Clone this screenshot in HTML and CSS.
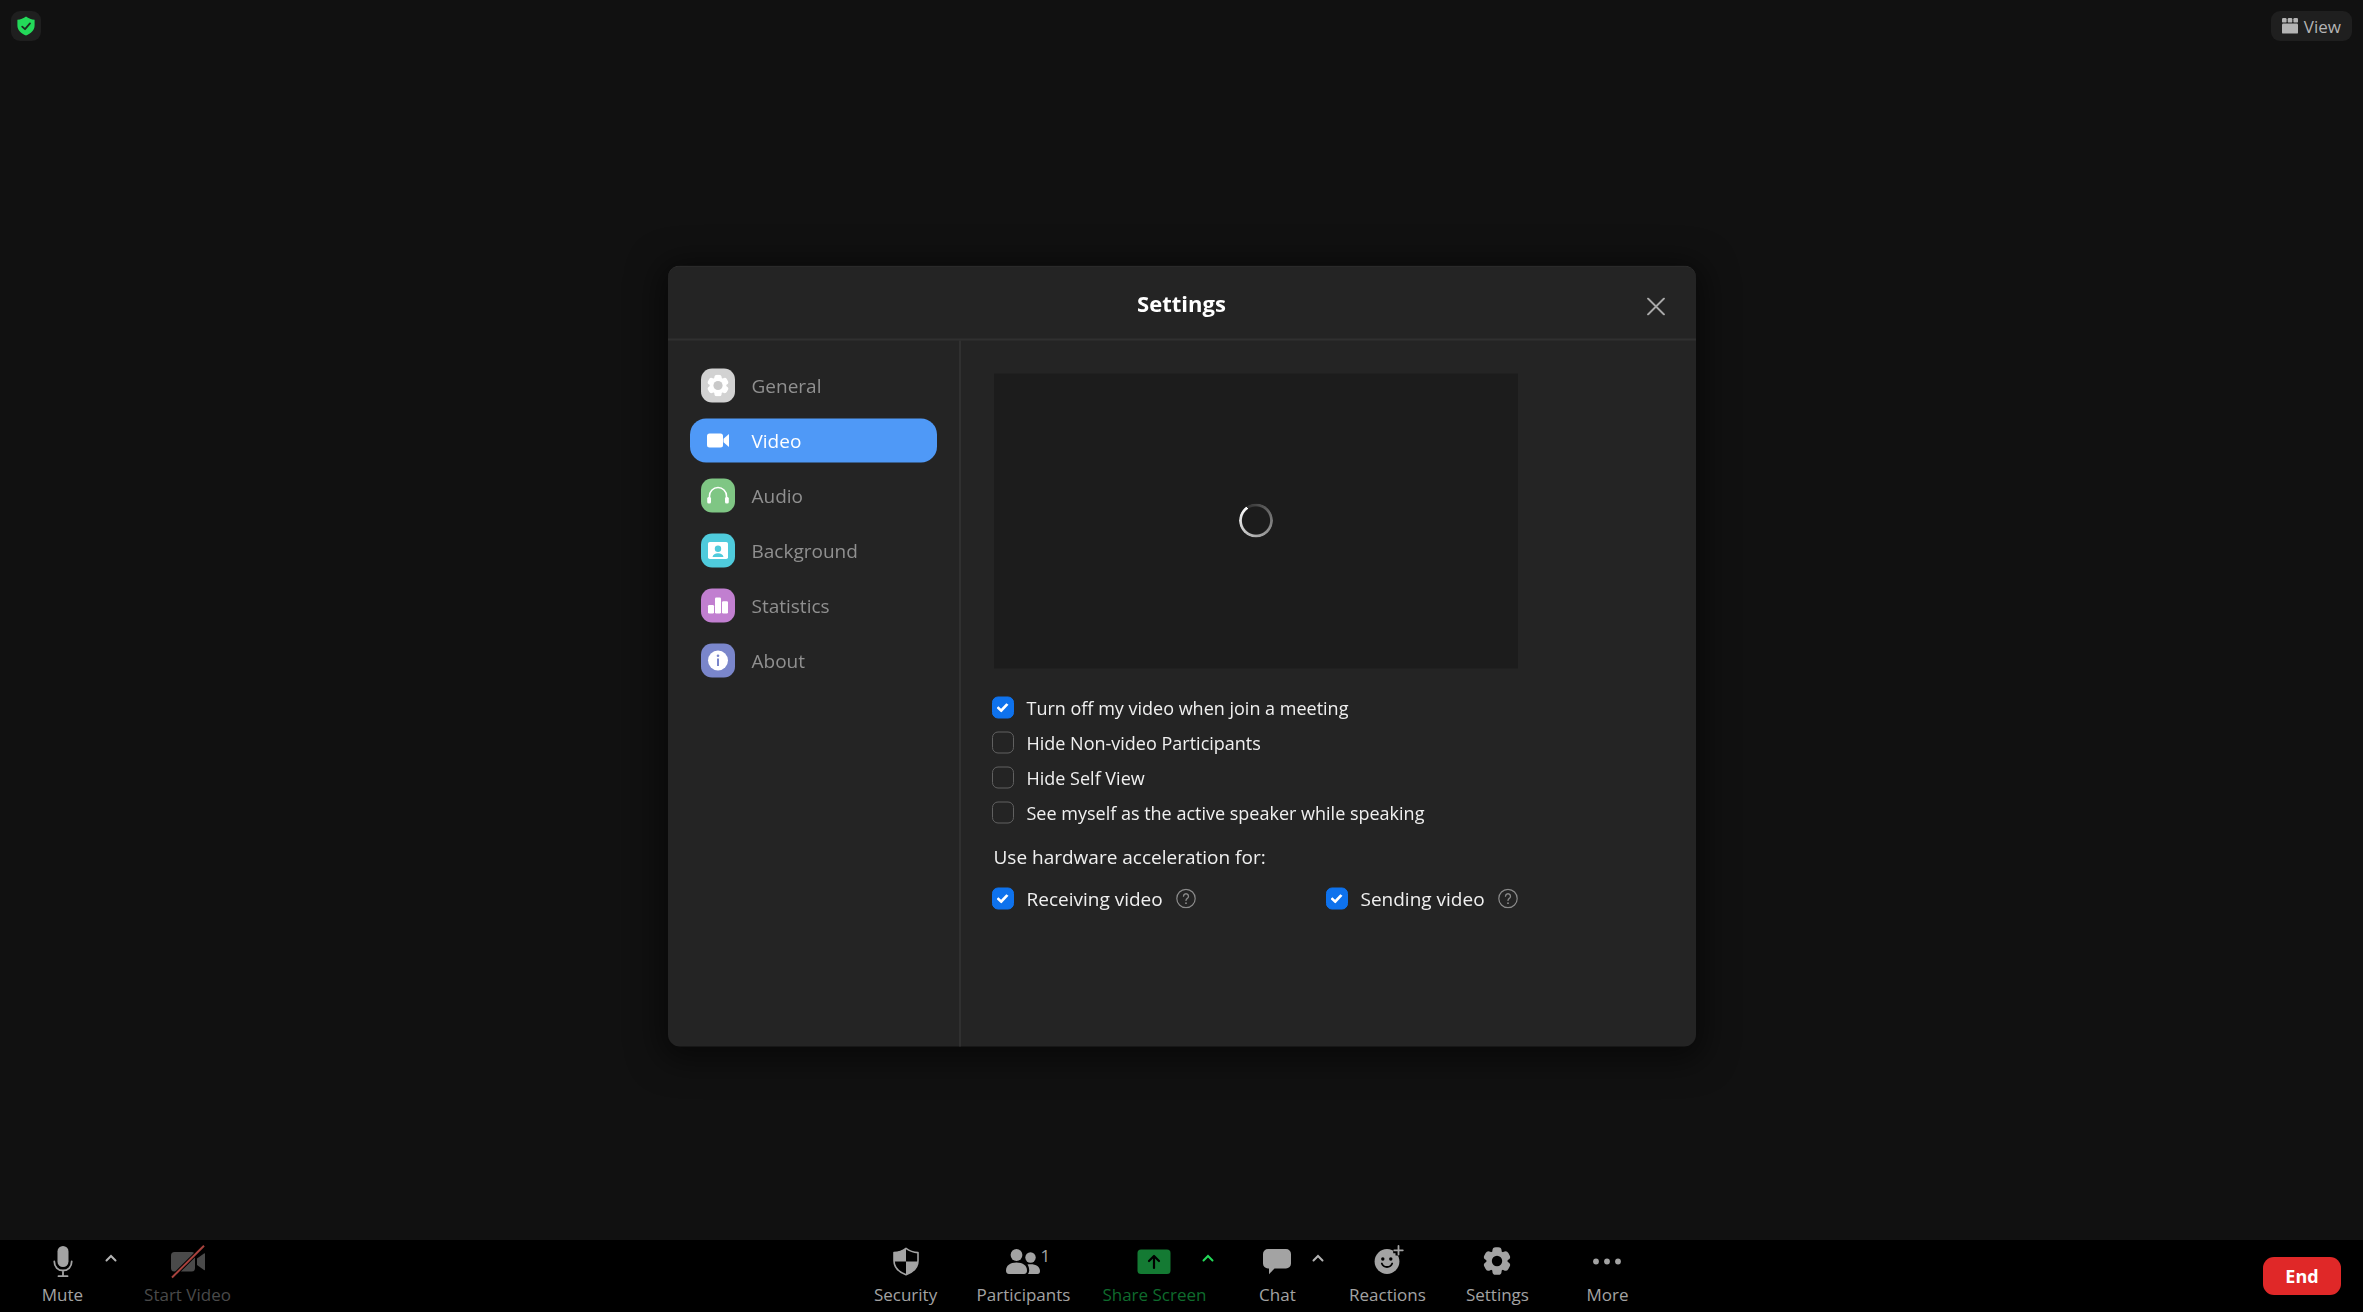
FILE: index.html
```html
<!DOCTYPE html>
<html lang="en">
<head>
    <meta charset="UTF-8">
    <meta name="viewport" content="width=device-width, initial-scale=1.0">
    <title>Meeting</title>
    <link rel="stylesheet" href="styles.css">
</head>
<body>
    <!-- shared shapes -->
    <svg class="defs" aria-hidden="true">
        <symbol id="gear" viewBox="-14 -14 28 28">
            <circle r="10.6"></circle>
            <rect x="-4.6" y="-13.8" width="9.2" height="27.6" rx="3.4"></rect>
            <rect x="-4.6" y="-13.8" width="9.2" height="27.6" rx="3.4" transform="rotate(60)"></rect>
            <rect x="-4.6" y="-13.8" width="9.2" height="27.6" rx="3.4" transform="rotate(120)"></rect>
        </symbol>
        <symbol id="caret" viewBox="0 0 12 8">
            <path d="M1.5 6.5 6 2l4.5 4.5" fill="none" stroke="currentColor" stroke-width="2" stroke-linecap="round"></path>
        </symbol>
        <symbol id="help" viewBox="0 0 20 20">
            <g fill="none" stroke="currentColor" stroke-linecap="round">
                <circle cx="10" cy="10" r="9.2" stroke-width="1.2"></circle>
                <path d="M7.5 7.7a2.5 2.5 0 1 1 3.8 2.2c-.9.6-1.3 1-1.3 2" stroke-width="1.3"></path>
                <path d="M10 14.6v.1" stroke-width="1.8"></path>
            </g>
        </symbol>
    </svg>

    <header class="topbar">
        <button class="badge badge-shield" aria-label="Meeting info">
            <svg width="18" height="20" viewBox="0 0 18 20">
                <path d="M9 .5c2.5 2 5.5 3 8.6 3.3v5.7c0 4.600-3.7 8.2-8.600 10C4.100 17.700.4 14.100.4 9.500V3.800C3.500 3.500 6.500 2.500 9 .5z" fill="#23d959"></path>
                <path d="M5.2 10.6 8 13.2l5-5.8" fill="none" stroke="#1b2b20" stroke-width="1.8" stroke-linecap="round" stroke-linejoin="round"></path>
            </svg>
        </button>
        <button class="badge badge-view">
            <svg width="16" height="16" viewBox="0 0 16 16" fill="#b4b4b4">
                <rect x="0" y="0" width="4.6" height="4.6" rx="1.2"></rect>
                <rect x="5.7" y="0" width="4.6" height="4.6" rx="1.2"></rect>
                <rect x="11.4" y="0" width="4.6" height="4.6" rx="1.2"></rect>
                <rect x="0" y="5.6" width="16" height="10" rx="1.2"></rect>
            </svg>
            View
        </button>
    </header>

    <main class="stage">
        <section class="modal" role="dialog" aria-labelledby="settings-title">
            <div class="modal-header">
                <h2 id="settings-title">Settings</h2>
                <button class="close" aria-label="Close">
                    <svg width="18" height="18" viewBox="0 0 18 18" fill="none" stroke="currentColor" stroke-width="1.8" stroke-linecap="round">
                        <path d="M1 1l16 16M17 1 1 17"></path>
                    </svg>
                </button>
            </div>
            <div class="modal-body">
                <nav class="tabs">
                    <button class="tab">
                        <svg class="tab-icon general" viewBox="0 0 34 34">
                            <use href="#gear" x="6" y="6" width="22" height="22" fill="#fff"></use>
                            <circle cx="17" cy="17" r="4.6" fill="#c9c9c9"></circle>
                        </svg>
                        General
                    </button>
                    <button class="tab active">
                        <svg class="tab-icon" viewBox="0 0 34 34" fill="#fff">
                            <rect x="6" y="10" width="16" height="14" rx="2.5"></rect>
                            <path d="M22.5 15.2 28 10.6v12.8l-5.5-4.6z"></path>
                        </svg>
                        Video
                    </button>
                    <button class="tab">
                        <svg class="tab-icon audio" viewBox="0 0 34 34">
                            <path d="M8.5 20v-2.5a8.5 8.5 0 0 1 17 0V20" fill="none" stroke="#fff" stroke-width="1.6"></path>
                            <rect x="6.2" y="18.5" width="3.8" height="6.5" rx="1.5" fill="#fff"></rect>
                            <rect x="24" y="18.5" width="3.8" height="6.5" rx="1.5" fill="#fff"></rect>
                        </svg>
                        Audio
                    </button>
                    <button class="tab">
                        <svg class="tab-icon background" viewBox="0 0 34 34">
                            <rect x="7" y="8.5" width="20" height="17" rx="1.8" fill="#fff"></rect>
                            <circle cx="17" cy="15.3" r="3.2" fill="#4fcbdc"></circle>
                            <path d="M11.5 23.5c.6-2.6 2.6-3.7 5.5-3.7s4.9 1.1 5.5 3.7z" fill="#4fcbdc"></path>
                        </svg>
                        Background
                    </button>
                    <button class="tab">
                        <svg class="tab-icon statistics" viewBox="0 0 34 34" fill="#fff">
                            <rect x="7" y="16.5" width="6" height="8.5" rx="1.2"></rect>
                            <rect x="14" y="9" width="6" height="16" rx="1.2"></rect>
                            <rect x="21" y="12.8" width="6" height="12.2" rx="1.2"></rect>
                        </svg>
                        Statistics
                    </button>
                    <button class="tab">
                        <svg class="tab-icon about" viewBox="0 0 34 34">
                            <circle cx="17" cy="17" r="10" fill="#fff"></circle>
                            <circle cx="17" cy="12.3" r="1.3" fill="#7a86cb"></circle>
                            <rect x="16" y="15" width="2" height="7.5" fill="#7a86cb"></rect>
                        </svg>
                        About
                    </button>
                </nav>

                <div class="panel">
                    <div class="preview"><div class="spinner"></div></div>
                    <div class="options">
                        <label class="option"><input type="checkbox" checked>Turn off my video when join a meeting</label>
                        <label class="option"><input type="checkbox">Hide Non-video Participants</label>
                        <label class="option"><input type="checkbox">Hide Self View</label>
                        <label class="option"><input type="checkbox">See myself as the active speaker while speaking</label>
                    </div>
                    <p class="subtitle">Use hardware acceleration for:</p>
                    <div class="hardware">
                        <label class="option">
                            <input type="checkbox" checked>Receiving video
                            <svg class="help" width="20" height="20"><use href="#help"></use></svg>
                        </label>
                        <label class="option">
                            <input type="checkbox" checked>Sending video
                            <svg class="help" width="20" height="20"><use href="#help"></use></svg>
                        </label>
                    </div>
                </div>
            </div>
        </section>
    </main>

    <footer class="footer">
        <div class="footer-left">
            <div class="tool">
                <button class="tool-button">
                    <svg width="34" height="34" viewBox="0 0 34 34">
                        <rect x="11.5" y="1" width="11" height="21" rx="5.5" fill="currentColor"></rect>
                        <path d="M8.3 16.5c0 5.4 3.6 9 8.7 9s8.7-3.6 8.7-9M17 25.5V31M12.5 31.2h9" fill="none" stroke="currentColor" stroke-width="1.8" stroke-linecap="round"></path>
                    </svg>
                    <span>Mute</span>
                </button>
                <button class="caret" aria-label="Audio options"><svg width="12" height="8"><use href="#caret"></use></svg></button>
            </div>
            <div class="tool">
                <button class="tool-button disabled">
                    <svg width="34" height="34" viewBox="0 0 34 34">
                        <rect x="0" y="7" width="24" height="19.5" rx="3.5" fill="currentColor"></rect>
                        <path d="M26 13.500 33 8.500c.6-.4 1 0 1 .5v15.500c0 .6-.4.9-1 .5L26 20z" fill="currentColor"></path>
                        <path d="M1 32.500 33 .8" stroke="#000" stroke-width="4"></path>
                        <path d="M1 32.500 33 .8" stroke="#a8423d" stroke-width="2"></path>
                    </svg>
                    <span>Start Video</span>
                </button>
            </div>
        </div>

        <div class="footer-center">
            <div class="tool">
                <button class="tool-button">
                    <svg width="34" height="34" viewBox="0 0 34 34">
                        <path d="M17 3.3c3.5 2.6 7.5 4 12 4.3v8.2c0 6.5-5 11.3-12 14-7-2.7-12-7.5-12-14V7.6c4.5-.3 8.5-1.7 12-4.3z" fill="none" stroke="currentColor" stroke-width="1.6" stroke-linejoin="round"></path>
                        <path d="M17 3.3V16.5H5V7.6c4.5-.3 8.5-1.7 12-4.3zM17 16.5h12c-.4 6-5.2 10.7-12 13.3z" fill="currentColor"></path>
                    </svg>
                    <span>Security</span>
                </button>
            </div>
            <div class="tool">
                <button class="tool-button">
                    <svg width="34" height="34" viewBox="0 0 34 34" fill="currentColor">
                        <circle cx="10.5" cy="10" r="5.9"></circle>
                        <path d="M0 25.500c0-5 4-8 10.500-8s10.500 3 10.500 8c0 2.200-1 3.500-3 3.500H3c-2 0-3-1.300-3-3.500z"></path>
                        <circle cx="24.5" cy="12.5" r="5.2"></circle>
                        <path d="M21.500 19.600c.9-.2 1.900-.3 3-.3 5.800 0 9.500 2.700 9.500 6.700 0 2-.9 3-2.500 3H22c.8-1 1.200-2.200 1.200-3.500 0-2.300-.6-4.300-1.700-5.900z"></path>
                    </svg>
                    <span>Participants</span>
                    <span class="count">1</span>
                </button>
            </div>
            <div class="tool share">
                <button class="tool-button">
                    <svg width="34" height="34" viewBox="0 0 34 34">
                        <rect x=".5" y="4.5" width="33" height="24.5" rx="3.5" fill="#147a33"></rect>
                        <path d="M17 23V11.5M12 16l5-5 5 5" fill="none" stroke="#000" stroke-width="2.2" stroke-linecap="round" stroke-linejoin="round"></path>
                    </svg>
                    <span>Share Screen</span>
                </button>
                <button class="caret" aria-label="Share options"><svg width="12" height="8"><use href="#caret"></use></svg></button>
            </div>
            <div class="tool">
                <button class="tool-button">
                    <svg width="34" height="34" viewBox="0 0 34 34">
                        <path d="M8 4h18a5 5 0 0 1 5 5v9.5a5 5 0 0 1-5 5H14.5L9 29.2v-5.7H8a5 5 0 0 1-5-5V9a5 5 0 0 1 5-5z" fill="currentColor"></path>
                    </svg>
                    <span>Chat</span>
                </button>
                <button class="caret" aria-label="Chat options"><svg width="12" height="8"><use href="#caret"></use></svg></button>
            </div>
            <div class="tool">
                <button class="tool-button">
                    <svg width="34" height="34" viewBox="0 0 34 34">
                        <circle cx="17" cy="16.5" r="12.4" fill="currentColor"></circle>
                        <path d="M28.5 0v10.6M23.2 5.3h10.6" stroke="#000" stroke-width="6"></path>
                        <path d="M28.5 1v8.6M24.2 5.3h8.6" stroke="currentColor" stroke-width="1.8" stroke-linecap="round"></path>
                        <circle cx="12.8" cy="14" r="1.7"></circle>
                        <circle cx="20.8" cy="14" r="1.7"></circle>
                        <path d="M11.8 18.5c1 2.5 2.8 3.5 5.2 3.5s4.2-1 5.2-3.5" fill="none" stroke="#000" stroke-width="1.8" stroke-linecap="round"></path>
                    </svg>
                    <span>Reactions</span>
                </button>
            </div>
            <div class="tool">
                <button class="tool-button">
                    <svg width="34" height="34" viewBox="0 0 34 34">
                        <use href="#gear" x="3" y="2" width="28" height="28" fill="currentColor"></use>
                        <circle cx="17" cy="16" r="5.2"></circle>
                    </svg>
                    <span>Settings</span>
                </button>
            </div>
            <div class="tool">
                <button class="tool-button">
                    <svg width="34" height="34" viewBox="0 0 34 34" fill="currentColor">
                        <circle cx="6" cy="16.5" r="2.9"></circle>
                        <circle cx="17" cy="16.5" r="2.9"></circle>
                        <circle cx="28" cy="16.5" r="2.9"></circle>
                    </svg>
                    <span>More</span>
                </button>
            </div>
        </div>

        <button class="end">End</button>
    </footer>
</body>
</html>
```
FILE: styles.css
```css
:root {
    --page-bg: #111111;
    --modal-bg: #242424;
    --line-color: #303030;
    --text-color: #f0f0f0;
    --muted-color: #909090;
    --tool-color: #a3a3a3;
    --primary-color: #4f99f7;
    --check-color: #0e72ed;
    --danger-color: #e02828;
}
* {
    box-sizing: border-box;
}
body {
    margin: 0;
    min-height: 100vh;
    display: flex;
    flex-direction: column;
    background-color: var(--page-bg);
    color: var(--text-color);
    font-family: "Open Sans", "Noto Sans", sans-serif;
    font-size: 18px;
}
button {
    padding: 0;
    border: none;
    background: none;
    color: inherit;
    font: inherit;
    cursor: pointer;
}
svg {
    flex-shrink: 0;
}
.defs {
    position: absolute;
    width: 0;
    height: 0;
}

/* top bar */
.topbar {
    display: flex;
    justify-content: space-between;
    padding: 11px;
}
.badge {
    display: flex;
    align-items: center;
    justify-content: center;
    height: 30px;
    border-radius: 9px;
    background-color: #1f1f1f;
}
.badge-shield {
    width: 30px;
}
.badge-view {
    gap: 6px;
    padding: 0 11px;
    color: #b4b4b4;
    font-size: 17px;
}

/* settings dialog, centered over the whole window */
.stage {
    flex: 1;
}
.modal {
    position: fixed;
    top: 50%;
    left: 50%;
    transform: translate(-50%, -50%);
    display: flex;
    flex-direction: column;
    width: 1028px;
    max-width: 100%;
    min-height: 781px;
    border-top: 1px solid var(--line-color);
    border-radius: 12px;
    background-color: var(--modal-bg);
    box-shadow: 0 6px 32px 8px rgba(0, 0, 0, 0.5);
}
.modal-header {
    display: grid;
    grid-template-columns: 1fr auto 1fr;
    align-items: center;
    height: 74px;
    padding: 0 31px;
    border-bottom: 2px solid var(--line-color);
}
.modal-header h2 {
    grid-column: 2;
    margin: 0;
    color: #fff;
    font-size: 22px;
    font-weight: 700;
}
.close {
    display: flex;
    justify-self: end;
    padding-top: 8px;
    color: #a8a8a8;
}
.modal-body {
    flex: 1;
    display: flex;
}
.tabs {
    display: flex;
    flex-direction: column;
    gap: 11px;
    width: 293px;
    padding: 23px 22px;
    border-right: 2px solid var(--line-color);
}
.tab {
    display: flex;
    align-items: center;
    gap: 17px;
    height: 44px;
    padding: 0 11px;
    border-radius: 16px;
    color: var(--muted-color);
    font-size: 19px;
}
.tab.active {
    background-color: var(--primary-color);
    color: #fff;
}
.tab-icon {
    width: 34px;
    height: 34px;
    border-radius: 11px;
}
.general { background-color: #d2d2d2; }
.audio { background-color: #7fc684; }
.background { background-color: #4fcbdc; }
.statistics { background-color: #c17fd0; }
.about { background-color: #7a86cb; }

.panel {
    flex: 1;
    padding: 33px;
}
.preview {
    display: flex;
    align-items: center;
    justify-content: center;
    max-width: 524px;
    aspect-ratio: 16 / 9;
    background-color: #1c1c1c;
}
.spinner {
    width: 34px;
    height: 34px;
    border-radius: 50%;
    background: conic-gradient(from 325deg, rgba(255, 255, 255, 0.1), #fff);
    -webkit-mask: radial-gradient(closest-side, transparent 80%, #000 86%);
    mask: radial-gradient(closest-side, transparent 80%, #000 86%);
}
.options {
    margin-top: 22px;
}
.options,
.hardware {
    margin-left: -2px;
}
.option {
    display: flex;
    align-items: center;
    gap: 13px;
    height: 35px;
}
.option input {
    appearance: none;
    display: grid;
    place-items: center;
    width: 22px;
    height: 22px;
    margin: 0;
    border: 1px solid #606060;
    border-radius: 6px;
}
.option input:checked {
    border-color: var(--check-color);
    background-color: var(--check-color);
}
.option input:checked::before {
    content: "";
    width: 12px;
    height: 10px;
    background-color: #fff;
    clip-path: polygon(0 52%, 16% 36%, 38% 60%, 82% 4%, 100% 20%, 40% 98%);
}
.subtitle {
    margin: 13px 0 12px;
    font-size: 19px;
    line-height: 26px;
}
.hardware {
    display: grid;
    grid-template-columns: 334px auto;
    font-size: 19px;
}
.help {
    color: #8a8a8a;
}

/* bottom bar */
.footer {
    display: flex;
    align-items: center;
    justify-content: space-between;
    height: 72px;
    padding-right: 22px;
    background-color: #000;
    color: var(--tool-color);
    font-size: 17px;
}
.footer-left,
.footer-center {
    display: flex;
}
.tool {
    position: relative;
}
.tool-button {
    position: relative;
    display: flex;
    flex-direction: column;
    align-items: center;
    gap: 4px;
    height: 72px;
    min-width: 110px;
    padding: 5px 16px 0;
    line-height: 23px;
}
.footer-left .tool-button {
    min-width: 125px;
}
.disabled {
    color: #4a4a4a;
}
.caret {
    position: absolute;
    top: 14px;
    right: 8px;
    display: flex;
    color: #b4b4b4;
}
.count {
    position: absolute;
    top: 4px;
    left: calc(50% + 17px);
}
.share .tool-button {
    color: #0f6b2d;
}
.share .caret {
    color: #23d959;
}
.end {
    width: 78px;
    height: 38px;
    border-radius: 11px;
    background-color: var(--danger-color);
    color: #fff;
    font-size: 18px;
    font-weight: 700;
}
```
